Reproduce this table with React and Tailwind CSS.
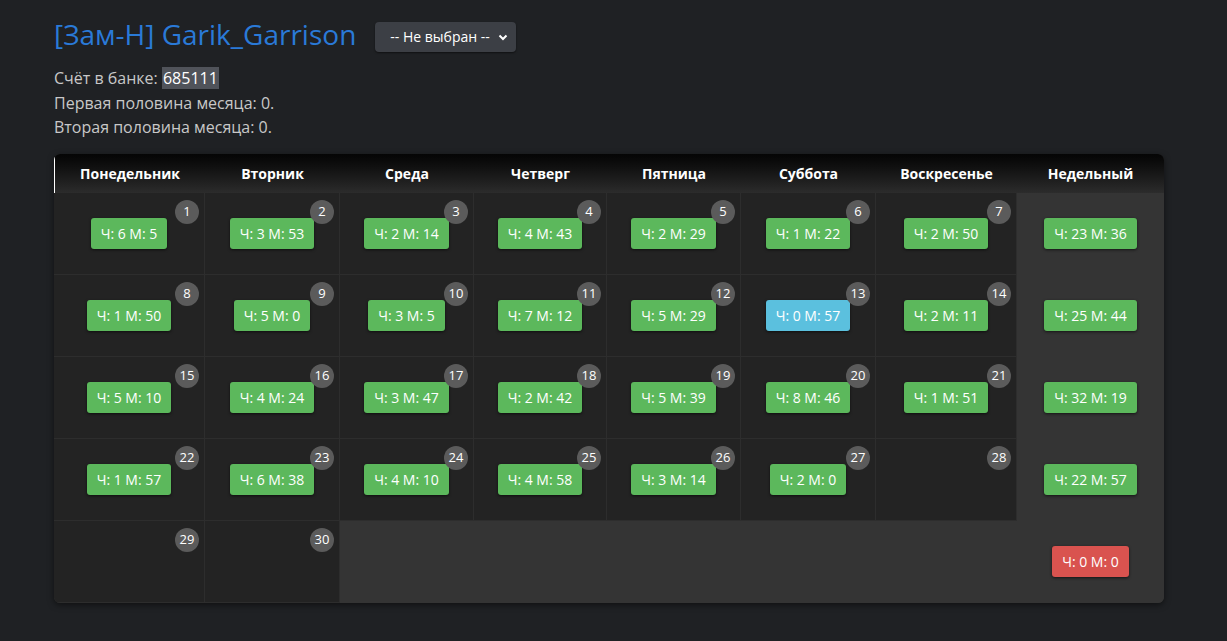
import React from "react";

const days = ["Понедельник", "Вторник", "Среда", "Четверг", "Пятница", "Суббота", "Воскресенье", "Недельный"];

// [day, hours, minutes, colour]
const weeks = [
  {
    cells: [[1, 6, 5], [2, 3, 53], [3, 2, 14], [4, 4, 43], [5, 2, 29], [6, 1, 22], [7, 2, 50]],
    total: [23, 36, "green"],
  },
  {
    cells: [[8, 1, 50], [9, 5, 0], [10, 3, 5], [11, 7, 12], [12, 5, 29], [13, 0, 57, "blue"], [14, 2, 11]],
    total: [25, 44, "green"],
  },
  {
    cells: [[15, 5, 10], [16, 4, 24], [17, 3, 47], [18, 2, 42], [19, 5, 39], [20, 8, 46], [21, 1, 51]],
    total: [32, 19, "green"],
  },
  {
    cells: [[22, 1, 57], [23, 6, 38], [24, 4, 10], [25, 4, 58], [26, 3, 14], [27, 2, 0], [28]],
    total: [22, 57, "green"],
  },
];

const colours = {
  green: "bg-[#5cb85c]",
  blue: "bg-[#5bc0de]",
  red: "bg-[#d9534f]",
};

function Time({ h, m, colour = "green" }) {
  return (
    <span
      className={`${colours[colour]} rounded-[3px] px-[10px] h-[31px] flex items-center text-[14px] text-white shadow-[0_1px_3px_rgba(0,0,0,0.6)] whitespace-nowrap`}
    >
      Ч: {h} М: {m}
    </span>
  );
}

function DayCell({ day, h, m, colour }) {
  return (
    <div className="relative bg-[#232323] border-r border-b border-[#2d2d2d] flex items-center justify-center h-[82px]">
      <span className="absolute top-[7px] right-[5px] w-[24px] h-[24px] rounded-full bg-[#5b5b5b] text-white text-[13px] flex items-center justify-center">
        {day}
      </span>
      {h !== undefined && <Time h={h} m={m} colour={colour} />}
    </div>
  );
}

function WeekCell({ h, m, colour }) {
  return (
    <div className="bg-[#343434] flex items-center justify-center h-[82px]">
      <Time h={h} m={m} colour={colour} />
    </div>
  );
}

export default function App() {
  return (
    <div className="min-h-[641px] bg-[#1f2124] text-[#c8c8c8] pl-[54px] pt-[16px] font-['Open_Sans',sans-serif]">
      {/* Header */}
      <div className="flex items-center gap-[19px]">
        <h1 className="text-[28px] leading-[36px] text-[#2a7ad8]">[Зам-Н] Garik_Garrison</h1>
        <div className="w-[141px] h-[30px] mt-[5px] bg-[#3c3f45] rounded-[4px] flex items-center justify-between pl-[15px] pr-[8px] text-[14px] text-white shadow-[0_1px_2px_rgba(0,0,0,0.5)]">
          <span>-- Не выбран --</span>
          <svg className="w-[10px] h-[10px]" viewBox="0 0 10 10" fill="none" stroke="currentColor" strokeWidth={2}>
            <path d="M1.5 3.5 5 7l3.5-3.5" />
          </svg>
        </div>
      </div>

      <div className="mt-[14px] text-[16px] leading-[24.5px]">
        <div>
          Счёт в банке: <span className="bg-[#50535a] text-white px-[1px]">685111</span>
        </div>
        <div>Первая половина месяца: 0.</div>
        <div>Вторая половина месяца: 0.</div>
      </div>

      {/* Calendar */}
      <div className="mt-[14px] w-[1110px] rounded-[6px] overflow-hidden bg-[#343434] shadow-[0_2px_6px_rgba(0,0,0,0.5)]">
        <div className="grid grid-cols-[151px_135px_134px_133px_134px_135px_141px_147px] h-[39px] bg-gradient-to-b from-[#050505] to-[#2c2c2c]">
          {days.map((d, i) => (
            <div
              key={d}
              className={`flex items-center justify-center text-[14px] font-bold text-white ${i === 0 ? "border-l border-white" : ""}`}
            >
              {d}
            </div>
          ))}
        </div>
        <div className="grid grid-cols-[151px_135px_134px_133px_134px_135px_141px_147px]">
          {weeks.map((w, wi) => (
            <React.Fragment key={wi}>
              {w.cells.map(([day, h, m, colour]) => (
                <DayCell key={day} day={day} h={h} m={m} colour={colour} />
              ))}
              <WeekCell h={w.total[0]} m={w.total[1]} colour={w.total[2]} />
            </React.Fragment>
          ))}
          <DayCell day={29} />
          <DayCell day={30} />
          <div className="col-span-5 bg-[#343434]" />
          <WeekCell h={0} m={0} colour="red" />
        </div>
      </div>
    </div>
  );
}
